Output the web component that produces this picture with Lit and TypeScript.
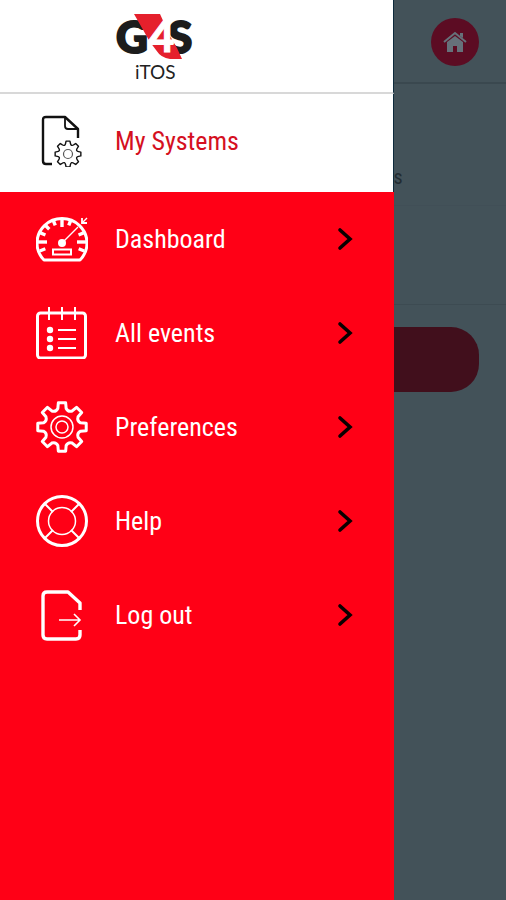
import { LitElement, html, svg, css } from "lit";
import { customElement } from "lit/decorators.js";

// Closed outline of an eight-toothed cog centred on (cx, cy).
function cog(cx: number, cy: number, outer: number, inner: number): string {
  const at = (r: number, a: number) =>
    `${(cx + r * Math.sin(a)).toFixed(2)} ${(cy - r * Math.cos(a)).toFixed(2)}`;
  const step = Math.PI / 4;
  let d = "";
  for (let i = 0; i < 8; i++) {
    const a = i * step;
    d += `${i ? "L" : "M"}${at(inner + 1, a - 0.22)}L${at(outer, a - 0.15)}L${at(outer, a + 0.15)}L${at(inner + 1, a + 0.22)}`;
    d += `Q${at(inner - 2, a + step / 2)} ${at(inner + 1, a + step - 0.22)}`;
  }
  return d + "Z";
}

const ticks = [-112, -90, -67, -45, -22, 0, 22, 67, 90, 112];

const icons = {
  systems: svg`
    <g fill="none" stroke="#111" stroke-linejoin="round">
      <path stroke-width="2.4" d="M16 49H10Q7 49 7 46V5Q7 2 10 2H29L42 14V23"/>
      <path stroke-width="1.8" d="M29 2V11Q29 14 32 14H42"/>
      <path stroke-width="1.4" d=${cog(32, 39, 13, 10)}/>
      <circle cx="32" cy="39" r="4.5" stroke-width="1.2" stroke="#555"/>
    </g>`,
  dashboard: svg`
    <g fill="none" stroke="#fff">
      <path stroke-width="3" stroke-linejoin="round" d="M8 47A25 24.5 0 1 1 44 47Z"/>
      ${ticks.map(
        (a) => svg`<path stroke-width="3.4" transform="rotate(${a} 26 29)" d=${a % 90 === 0 ? "M26 5V14" : "M26 5V11"}/>`,
      )}
      <path stroke-width="1.4" d="M26 30L42 14M46 10L51 5"/>
      <path stroke-width="1.8" d="M46 5V10H51"/>
      <rect x="17" y="36.5" width="18" height="5" stroke-width="2"/>
    </g>
    <circle cx="26" cy="30" r="4" fill="#fff"/>`,
  events: svg`
    <g fill="none" stroke="#fff">
      <rect x="1.5" y="6" width="48" height="45" rx="3" stroke-width="3"/>
      <path stroke-width="2" d="M13 0V13M26 0V13M39 0V13M22 23H40M22 32H40M22 41H40"/>
    </g>
    <g fill="#fff"><circle cx="14" cy="23" r="3.2"/><circle cx="14" cy="32" r="3.2"/><circle cx="14" cy="41" r="3.2"/></g>`,
  preferences: svg`
    <g fill="none" stroke="#fff" stroke-linejoin="round">
      <path stroke-width="3" d=${cog(26, 26, 24.5, 18)}/>
      <circle cx="26" cy="26" r="11" stroke-width="1.5"/>
      <circle cx="26" cy="26" r="6" stroke-width="1.5"/>
    </g>`,
  help: svg`
    <g fill="none" stroke="#fff">
      <circle cx="26" cy="26" r="24.5" stroke-width="3"/>
      <circle cx="26" cy="26" r="13.5" stroke-width="1.5"/>
      <path stroke-width="2" d="M9 9L17 17M43 9L35 17M9 43L17 35M43 43L35 35"/>
    </g>`,
  logout: svg`
    <g fill="none" stroke="#fff">
      <path stroke-width="3.4" stroke-linejoin="round" d="M44 21V14L32 3H11Q7 3 7 7V46Q7 50 11 50H40Q44 50 44 46V41"/>
      <path stroke-width="1.6" d="M23 31H44M38 25L44 31L38 37"/>
    </g>`,
};

const entries = [
  { label: "Dashboard", icon: icons.dashboard },
  { label: "All events", icon: icons.events },
  { label: "Preferences", icon: icons.preferences },
  { label: "Help", icon: icons.help },
  { label: "Log out", icon: icons.logout },
];

@customElement("app-root")
export class AppRoot extends LitElement {
  static styles = css`
    :host {
      display: block;
      font-family: "Roboto Condensed", "Liberation Sans Narrow", Roboto, sans-serif;
    }
    .app {
      display: grid;
      grid-template-columns: 7fr 2fr;
      min-height: 100vh;
      background: #435259;
    }
    .drawer {
      background: #ff0016;
    }
    .brand {
      box-sizing: border-box;
      height: 94px;
      padding: 12px 0 0 29%;
      background: #fff;
      border-bottom: 2px solid #d8d8d8;
      border-right: 1px solid #0d2a3c;
    }
    .logo {
      display: block;
      width: 90px;
      height: 76px;
      overflow: visible;
    }
    .item {
      box-sizing: border-box;
      display: grid;
      grid-template-columns: 52px 1fr 16px;
      column-gap: 27px;
      align-items: center;
      height: 94px;
      padding: 0 41px 0 36px;
      color: #fff;
      font-size: 26px;
      line-height: 32px;
      text-decoration: none;
    }
    .current {
      height: 98px;
      padding-bottom: 5px;
      background: #fff;
      color: #d5101f;
      border-right: 1px solid #0d2a3c;
    }
    .icon {
      width: 52px;
      height: 52px;
    }
    .arrow {
      width: 16px;
      height: 24px;
    }
    .page {
      overflow: hidden;
    }
    .bar {
      box-sizing: border-box;
      display: flex;
      align-items: center;
      justify-content: flex-end;
      height: 84px;
      padding: 2px 27px 0 0;
      border-bottom: 2px solid #3a484f;
    }
    .home {
      width: 48px;
      height: 48px;
      padding: 0;
      border: 0;
      border-radius: 50%;
      background: #5c0c23;
    }
    .home svg {
      display: block;
      margin: auto;
    }
    .row {
      box-sizing: border-box;
      display: flex;
      align-items: flex-end;
      height: 122px;
      padding-bottom: 16px;
      border-bottom: 1px solid #414f57;
      color: #222c32;
      font-size: 20px;
      line-height: 24px;
    }
    .gap {
      height: 98px;
      border-bottom: 1px solid #3d4b52;
    }
    .action {
      display: block;
      width: calc(100% - 27px);
      height: 65px;
      margin-top: 22px;
      border: 0;
      border-radius: 0 28px 28px 0;
      background: #410f1c;
    }
  `;

  render() {
    return html`
      <div class="app">
        <nav class="drawer">
          <header class="brand">
            <svg class="logo" viewBox="0 0 90 76" role="img" aria-label="G4S iTOS">
              <g font-family="Lato, sans-serif" font-weight="900" font-size="44">
                <text x="2" y="41" fill="#1c1c1c" stroke="#1c1c1c" stroke-width="2">G</text>
                <text x="54" y="41" fill="#1c1c1c" stroke="#1c1c1c" stroke-width="2">S</text>
                <path fill="#e5202c" d="M20 2H46L56 24L63 36L68 47H56Q47 46 42 38L36 30Z"/>
                <text x="35" y="40" fill="#fff" stroke="#fff">4</text>
              </g>
              <text x="21" y="67" font-family="Lato, sans-serif" font-size="19" fill="#222">iTOS</text>
            </svg>
          </header>
          <a class="item current" href="#systems" aria-current="page">
            <svg class="icon" viewBox="0 0 52 52" aria-hidden="true">${icons.systems}</svg>
            <span>My Systems</span>
          </a>
          ${entries.map(
            (e) => html`
              <a class="item" href="#">
                <svg class="icon" viewBox="0 0 52 52" aria-hidden="true">${e.icon}</svg>
                <span>${e.label}</span>
                <svg class="arrow" viewBox="0 0 16 24" aria-hidden="true">
                  <path d="M3 3L13 12L3 21" fill="none" stroke="#0a0000" stroke-width="3.6" stroke-linecap="round"/>
                </svg>
              </a>
            `,
          )}
        </nav>
        <main class="page">
          <div class="bar">
            <button class="home" aria-label="Home">
              <svg width="24" height="24" viewBox="0 0 24 24" aria-hidden="true">
                <path d="M1 12L12 3L23 12" fill="none" stroke="#66717a" stroke-width="2"/>
                <path d="M17 3H20V8L17 6Z" fill="#66717a"/>
                <path d="M4 12L12 6L20 12V22H14V16H10V22H4Z" fill="#66717a"/>
              </svg>
            </button>
          </div>
          <div class="row">s</div>
          <div class="gap"></div>
          <button class="action" aria-label="Continue"></button>
        </main>
      </div>
    `;
  }
}
